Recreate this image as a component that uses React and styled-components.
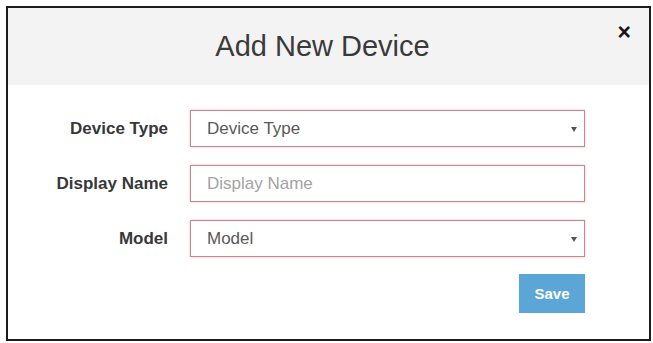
import { Fragment } from "react";
import styled, { createGlobalStyle } from "styled-components";

const GlobalStyle = createGlobalStyle`
  html, body {
    margin: 0;
    padding: 0;
    background: #ffffff;
  }
  body {
    font-family: "Liberation Sans", Arial, sans-serif;
  }
`;

const Page = styled.div`
  padding: 6px 2px 2px 6px;
`;

const Modal = styled.div`
  width: 645px;
  height: 335px;
  box-sizing: border-box;
  border: 2px solid #1c1c1c;
  background: #fff;
  display: flex;
  flex-direction: column;
`;

const Header = styled.div`
  position: relative;
  height: 77px;
  background: #f3f3f3;
  display: flex;
  align-items: center;
  justify-content: center;
  padding-right: 12px;
`;

const Title = styled.h4`
  margin: 0;
  font-size: 29px;
  font-weight: 400;
  color: #3a3a3a;
`;

const Close = styled.button`
  position: absolute;
  top: 13px;
  right: 18px;
  border: 0;
  background: none;
  padding: 0;
  font-family: "Liberation Sans", Arial, sans-serif;
  font-size: 23px;
  font-weight: 700;
  line-height: 1;
  color: #151515;
  cursor: pointer;
`;

const Body = styled.form`
  padding: 25px 0 0 0;
  display: grid;
  grid-template-columns: 160px 395px;
  column-gap: 22px;
  row-gap: 18px;
  align-items: center;
`;

const Label = styled.label`
  text-align: right;
  font-size: 17px;
  font-weight: 700;
  color: #383838;
`;

const Field = styled.div`
  position: relative;
  height: 37px;
  box-sizing: border-box;
  border: 1px solid #cf8489;
  box-shadow: 0 0 2px rgba(210, 110, 115, 0.45);
  background: #fff;
  display: flex;
  align-items: center;
  padding: 0 16px;
  font-size: 17px;
  color: ${(p) => (p.$placeholder ? "#a3a3a3" : "#595959")};
`;

const Caret = styled.span`
  position: absolute;
  right: 7px;
  top: 16px;
  width: 0;
  height: 0;
  border-left: 3px solid transparent;
  border-right: 3px solid transparent;
  border-top: 5px solid #555;
`;

const Actions = styled.div`
  grid-column: 2;
  display: flex;
  justify-content: flex-end;
  margin-top: -1px;
`;

const SaveButton = styled.button`
  width: 66px;
  height: 39px;
  border: 0;
  background: #5ba6d7;
  color: #fff;
  font-family: "Liberation Sans", Arial, sans-serif;
  font-size: 15px;
  font-weight: 700;
  cursor: pointer;
`;

const fields = [
  { label: "Device Type", value: "Device Type", select: true },
  { label: "Display Name", value: "Display Name", placeholder: true },
  { label: "Model", value: "Model", select: true },
];

export default function App() {
  return (
    <>
      <GlobalStyle />
      <Page>
        <Modal>
          <Header>
            <Title>Add New Device</Title>
            <Close type="button">×</Close>
          </Header>
          <Body onSubmit={(e) => e.preventDefault()}>
            {fields.map((f) => (
              <Fragment key={f.label}>
                <Label>{f.label}</Label>
                <Field $placeholder={f.placeholder}>
                  {f.value}
                  {f.select && <Caret />}
                </Field>
              </Fragment>
            ))}
            <Actions>
              <SaveButton type="submit">Save</SaveButton>
            </Actions>
          </Body>
        </Modal>
      </Page>
    </>
  );
}
